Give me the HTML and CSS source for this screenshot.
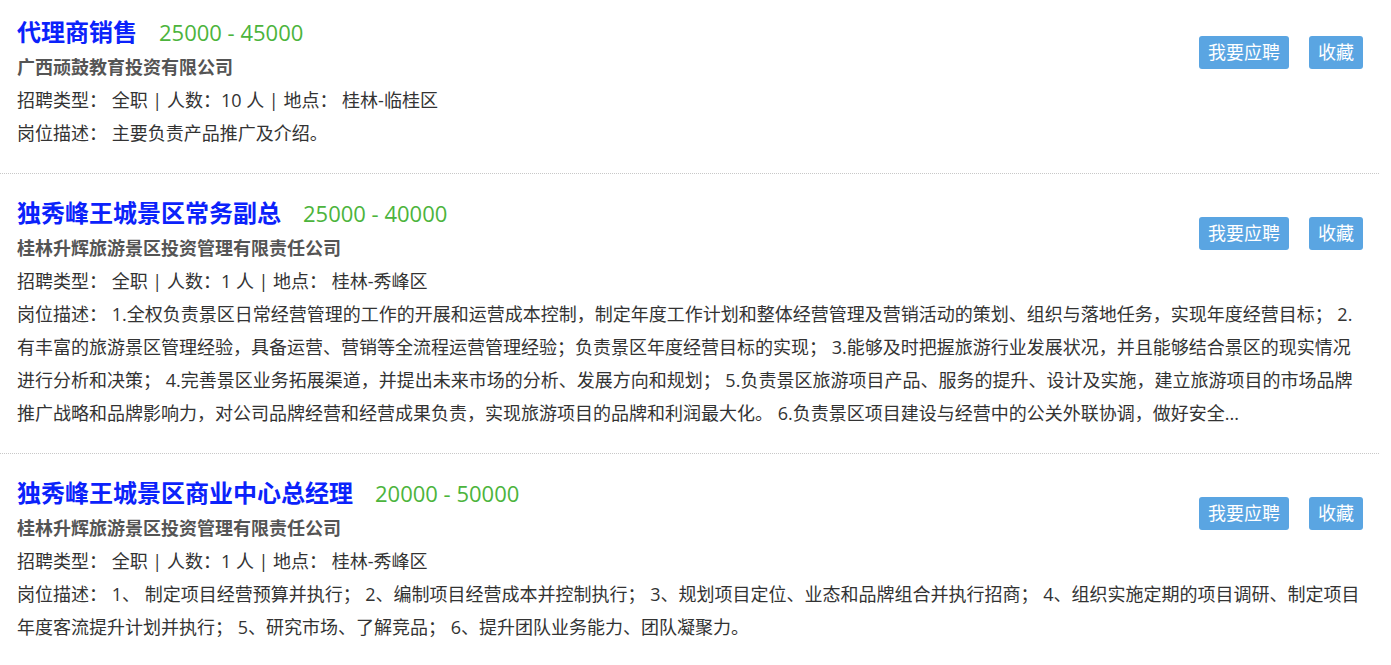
FILE: index.html
```html
<!DOCTYPE html>
<html lang="zh-CN">
<head>
    <meta charset="UTF-8">
    <meta name="viewport" content="width=device-width, initial-scale=1.0">
    <title>招聘信息</title>
    <link rel="stylesheet" href="styles.css">
</head>
<body>
    <div class="job-list">
        <div class="job-item">
            <div class="job-actions">
                <a class="btn" href="#">我要应聘</a>
                <a class="btn" href="#">收藏</a>
            </div>
            <div class="job-head">
                <a class="job-title" href="#">代理商销售</a>
                <span class="job-salary">25000 - 45000</span>
            </div>
            <div class="job-company">广西顽鼓教育投资有限公司</div>
            <div class="job-meta">招聘类型： 全职 | 人数：10 人 | 地点： 桂林-临桂区</div>
            <div class="job-desc">岗位描述： 主要负责产品推广及介绍。</div>
        </div>
        <div class="job-item">
            <div class="job-actions">
                <a class="btn" href="#">我要应聘</a>
                <a class="btn" href="#">收藏</a>
            </div>
            <div class="job-head">
                <a class="job-title" href="#">独秀峰王城景区常务副总</a>
                <span class="job-salary">25000 - 40000</span>
            </div>
            <div class="job-company">桂林升辉旅游景区投资管理有限责任公司</div>
            <div class="job-meta">招聘类型： 全职 | 人数：1 人 | 地点： 桂林-秀峰区</div>
            <div class="job-desc">岗位描述： 1.全权负责景区日常经营管理的工作的开展和运营成本控制，制定年度工作计划和整体经营管理及营销活动的策划、组织与落地任务，实现年度经营目标； 2.有丰富的旅游景区管理经验，具备运营、营销等全流程运营管理经验；负责景区年度经营目标的实现； 3.能够及时把握旅游行业发展状况，并且能够结合景区的现实情况进行分析和决策； 4.完善景区业务拓展渠道，并提出未来市场的分析、发展方向和规划； 5.负责景区旅游项目产品、服务的提升、设计及实施，建立旅游项目的市场品牌推广战略和品牌影响力，对公司品牌经营和经营成果负责，实现旅游项目的品牌和利润最大化。 6.负责景区项目建设与经营中的公关外联协调，做好安全...</div>
        </div>
        <div class="job-item">
            <div class="job-actions">
                <a class="btn" href="#">我要应聘</a>
                <a class="btn" href="#">收藏</a>
            </div>
            <div class="job-head">
                <a class="job-title" href="#">独秀峰王城景区商业中心总经理</a>
                <span class="job-salary">20000 - 50000</span>
            </div>
            <div class="job-company">桂林升辉旅游景区投资管理有限责任公司</div>
            <div class="job-meta">招聘类型： 全职 | 人数：1 人 | 地点： 桂林-秀峰区</div>
            <div class="job-desc">岗位描述： 1、 制定项目经营预算并执行； 2、编制项目经营成本并控制执行； 3、规划项目定位、业态和品牌组合并执行招商； 4、组织实施定期的项目调研、制定项目年度客流提升计划并执行； 5、研究市场、了解竞品； 6、提升团队业务能力、团队凝聚力。</div>
        </div>
    </div>
</body>
</html>
```

FILE: styles.css
```css
body {
    font-family: "Open Sans", "Noto Sans CJK SC", sans-serif;
    font-size: 18px;
    color: #333;
    margin: 0;
    background-color: #fff;
}

a {
    text-decoration: none;
}

.job-list {
    width: 1379px;
    margin-top: -7px; /* 页面已向下滚动 */
}

.job-item {
    display: flow-root;
    padding: 19px 16px 23px 17px;
    border-bottom: 1px dotted #c8c8c8;
}

.job-head {
    display: flex;
    align-items: baseline;
    gap: 22px;
    line-height: 37px;
}

.job-title {
    font-family: "Noto Sans CJK SC", sans-serif;
    font-size: 24px;
    font-weight: bold;
    color: #0b22fb;
}

.job-salary {
    font-size: 22px;
    color: #4cb43c;
}

.job-company {
    font-weight: bold;
    color: #555;
    line-height: 33px;
}

.job-meta,
.job-desc {
    line-height: 33px;
}

/* 按钮浮动在右侧，描述文字在下方占满整行 */
.job-actions {
    float: right;
    display: flex;
    gap: 20px;
    margin-top: 24px;
}

.btn {
    display: block;
    height: 33px;
    line-height: 33px;
    padding: 0 9px;
    background-color: #5aa5e2;
    color: #fff;
    border-radius: 3px;
    white-space: nowrap;
}
```
